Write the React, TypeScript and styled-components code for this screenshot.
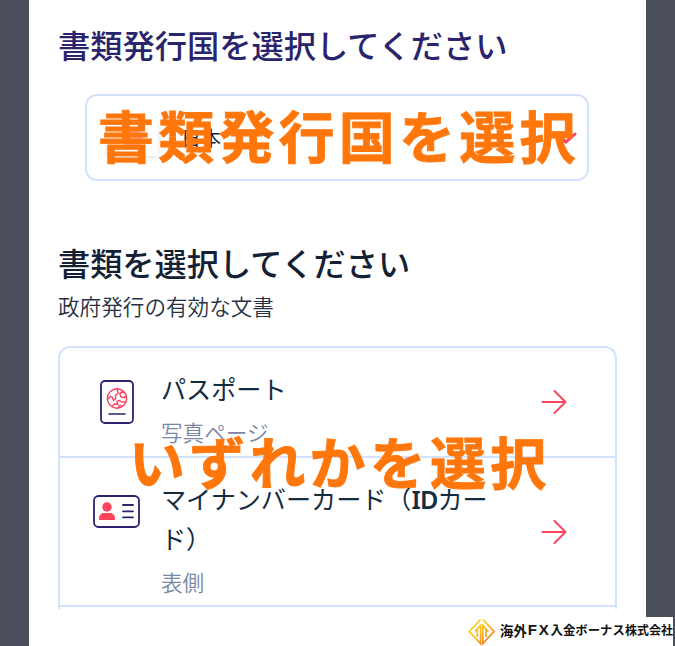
import React from "react";
import styled, { createGlobalStyle } from "styled-components";

const GlobalStyle = createGlobalStyle`
  *, *::before, *::after { box-sizing: border-box; }
  body {
    margin: 0;
    background: #4a4f5b;
    font-family: "Noto Sans CJK JP", "Noto Sans", sans-serif;
  }
`;

const Page = styled.main`
  position: relative;
  width: 675px;
  height: 646px;
  overflow: hidden;
  padding-left: 29px;
  background: #4a4f5b;
`;

const Sheet = styled.div`
  width: 617px;
  height: 646px;
  padding: 20px 29px 0;
  background: #fff;
`;

const Heading = styled.h1<{ $color: string; $size: number }>`
  margin: 0;
  height: 48px;
  font-size: ${(p) => p.$size}px;
  line-height: 48px;
  font-weight: 500;
  color: ${(p) => p.$color};
  white-space: nowrap;
`;

const CountrySelect = styled.div`
  display: flex;
  align-items: center;
  width: 504px;
  height: 87px;
  margin: 26px 0 57px 27px;
  padding: 0 10px 0 20px;
  border: 2px solid #d3e3fd;
  border-radius: 12px;
`;

const Flag = styled.span`
  display: flex;
  align-items: center;
  justify-content: center;
  width: 51px;
  height: 35px;
  margin-top: 2px;
  background: #fff;
  box-shadow: 0 1px 4px #dcdce6;

  &::before {
    content: "";
    width: 21px;
    height: 21px;
    border-radius: 50%;
    background: #ffadb5;
  }
`;

const Country = styled.span`
  flex: 1;
  margin-left: 23px;
  font-size: 20px;
  line-height: 30px;
  color: #14263b;
`;

const Subheading = styled.p`
  margin: 4px 0 24px;
  height: 32px;
  font-size: 21.6px;
  line-height: 32px;
  font-weight: 350;
  color: #263244;
`;

const DocumentList = styled.div`
  width: 559px;
  height: 263px;
  overflow: hidden;
  border: 2px solid #d3e3fd;
  border-bottom: 0;
  border-radius: 12px 12px 0 0;
`;

const DocumentRow = styled.div<{ $height: number }>`
  display: grid;
  grid-template-columns: 101px 1fr 26px;
  height: ${(p) => p.$height}px;
  padding-right: 48px;
  border-bottom: 2px solid #d3e3fd;
`;

const IconCell = styled.div<{ $top: number }>`
  display: flex;
  justify-content: center;
  align-items: flex-start;
  padding: ${(p) => p.$top}px 0 0 12px;
`;

const ArrowCell = styled.div<{ $top: number }>`
  padding-top: ${(p) => p.$top}px;
`;

const DocumentText = styled.div<{ $top: number }>`
  padding-top: ${(p) => p.$top}px;
`;

const DocumentName = styled.div`
  font-size: 25.1px;
  line-height: 39px;
  color: #142c40;
  white-space: nowrap;

  b {
    font-family: "Noto Sans", sans-serif;
    font-weight: 600;
    letter-spacing: -0.8px;
  }
`;

const DocumentNote = styled.div`
  margin-top: 7px;
  font-size: 21.6px;
  line-height: 34px;
  font-weight: 350;
  color: #7a88a5;
`;

const Callout = styled.div<{ $left: number; $top: number }>`
  position: absolute;
  left: ${(p) => p.$left}px;
  top: ${(p) => p.$top}px;
  font-size: 56px;
  line-height: 70px;
  letter-spacing: 4.2px;
  font-weight: 700;
  color: #ff760b;
  -webkit-text-stroke: 0.8px #ff760b;
  white-space: nowrap;
`;

const Brand = styled.div`
  position: absolute;
  right: 2px;
  bottom: 0;
  display: flex;
  align-items: center;
  width: 205px;
  height: 29px;
  background: #fff;

  svg {
    flex: none;
  }
`;

const BrandName = styled.div`
  display: flex;
  align-items: center;
  margin-left: 5px;
  font-size: 13.4px;
  line-height: 26px;
  height: 30px;
  padding-bottom: 4px;
  font-weight: 700;
  color: #111;
  white-space: nowrap;
`;

const BrandLatin = styled.span`
  font-family: "Liberation Sans", sans-serif;
  font-size: 15px;
  letter-spacing: 1.8px;
  margin-left: 1px;
`;

const BrandProduct = styled.span`
  font-size: 12.4px;
`;

const BrandSuffix = styled.span`
  font-size: 12px;
`;

const Arrow = () => (
  <svg width="26" height="26" viewBox="0 0 26 26" fill="none" stroke="#fb4460" strokeWidth="2" strokeLinecap="round" strokeLinejoin="round">
    <path d="M1.5 13H24.5M13.5 2L24.5 13L13.5 24" />
  </svg>
);

const Passport = () => (
  <svg width="34" height="44" viewBox="0 0 34 44" fill="none" strokeLinecap="round" strokeLinejoin="round">
    <rect x="1" y="1" width="32" height="42" rx="4" stroke="#29246b" strokeWidth="1.8" />
    <path d="M9 34H25" stroke="#29246b" strokeWidth="1.6" />
    <g stroke="#fb4460" strokeWidth="1.4">
      <circle cx="17" cy="18.5" r="9.7" />
      <path d="M8 19L10.5 16.5L12.3 17.2L13.5 20.5L15.7 18.5L15.4 15.5L18.3 13L17 9M24.5 12.5L21.5 12L19.8 14L21 17L24.5 17.5L26 16M12 26.5L14.5 24L18 24.5L17 21.5L19.5 20.5L22 22L25.5 22M18 28L19.5 25.5L22 26" />
    </g>
  </svg>
);

const IdCard = () => (
  <svg width="47" height="33" viewBox="0 0 47 33" fill="none">
    <rect x="1" y="1" width="45" height="31" rx="4.5" stroke="#29246b" strokeWidth="1.8" />
    <circle cx="14" cy="12" r="4.7" fill="#ff4358" />
    <path d="M6 25V23.5C6 20.4 8 18 11 18H17C20 18 22 20.4 22 23.5V25Z" fill="#ff4358" />
    <path d="M30 10H40M30 16.3H40M30 22.3H40" stroke="#29246b" strokeWidth="1.8" strokeLinecap="round" />
  </svg>
);

const Chevron = () => (
  <svg width="22" height="12" viewBox="0 0 22 12" fill="none" stroke="#fb4460" strokeWidth="3" strokeLinecap="round">
    <path d="M2 2L11 10L20 2" />
  </svg>
);

const BrandMark = () => (
  <svg width="27" height="28" viewBox="0 0 27 28" fill="none">
    <defs>
      <linearGradient id="gold" gradientUnits="userSpaceOnUse" x1="3" y1="3" x2="22" y2="25">
        <stop stopColor="#ffd61c" />
        <stop offset=".5" stopColor="#fdb91c" />
        <stop offset="1" stopColor="#ee7424" />
      </linearGradient>
    </defs>
    <g stroke="url(#gold)" strokeWidth="1.7">
      <path d="M12.6 1.5L1.3 13.5L12.6 25.5V7.5L7 13.3M14.8 1.5L26 13.5L14.8 25.5V7.5L20.3 13.3M9.3 11.5V19M18 11.5V19" />
    </g>
  </svg>
);

export default function App() {
  return (
    <>
      <GlobalStyle />
      <Page>
        <Sheet>
          <Heading $color="#29246b" $size={32.25}>書類発行国を選択してください</Heading>
          <CountrySelect>
            <Flag />
            <Country>日本</Country>
            <Chevron />
          </CountrySelect>
          <Heading as="h2" $color="#142033" $size={32.2}>書類を選択してください</Heading>
          <Subheading>政府発行の有効な文書</Subheading>
          <DocumentList>
            <DocumentRow $height={110}>
              <IconCell $top={32}><Passport /></IconCell>
              <DocumentText $top={21}>
                <DocumentName>パスポート</DocumentName>
                <DocumentNote>写真ページ</DocumentNote>
              </DocumentText>
              <ArrowCell $top={41}><Arrow /></ArrowCell>
            </DocumentRow>
            <DocumentRow $height={149}>
              <IconCell $top={37}><IdCard /></IconCell>
              <DocumentText $top={21}>
                <DocumentName>マイナンバーカード（<b>ID</b>カー<br />ド）</DocumentName>
                <DocumentNote>表側</DocumentNote>
              </DocumentText>
              <ArrowCell $top={61}><Arrow /></ArrowCell>
            </DocumentRow>
          </DocumentList>
        </Sheet>
        <Callout $left={98} $top={99}>書類発行国を選択</Callout>
        <Callout $left={129} $top={425}>いずれかを選択</Callout>
        <Brand>
          <BrandMark />
          <BrandName>
            海外<BrandLatin>FX</BrandLatin><BrandProduct>入金ボーナス</BrandProduct><BrandSuffix>株式会社</BrandSuffix>
          </BrandName>
        </Brand>
      </Page>
    </>
  );
}
